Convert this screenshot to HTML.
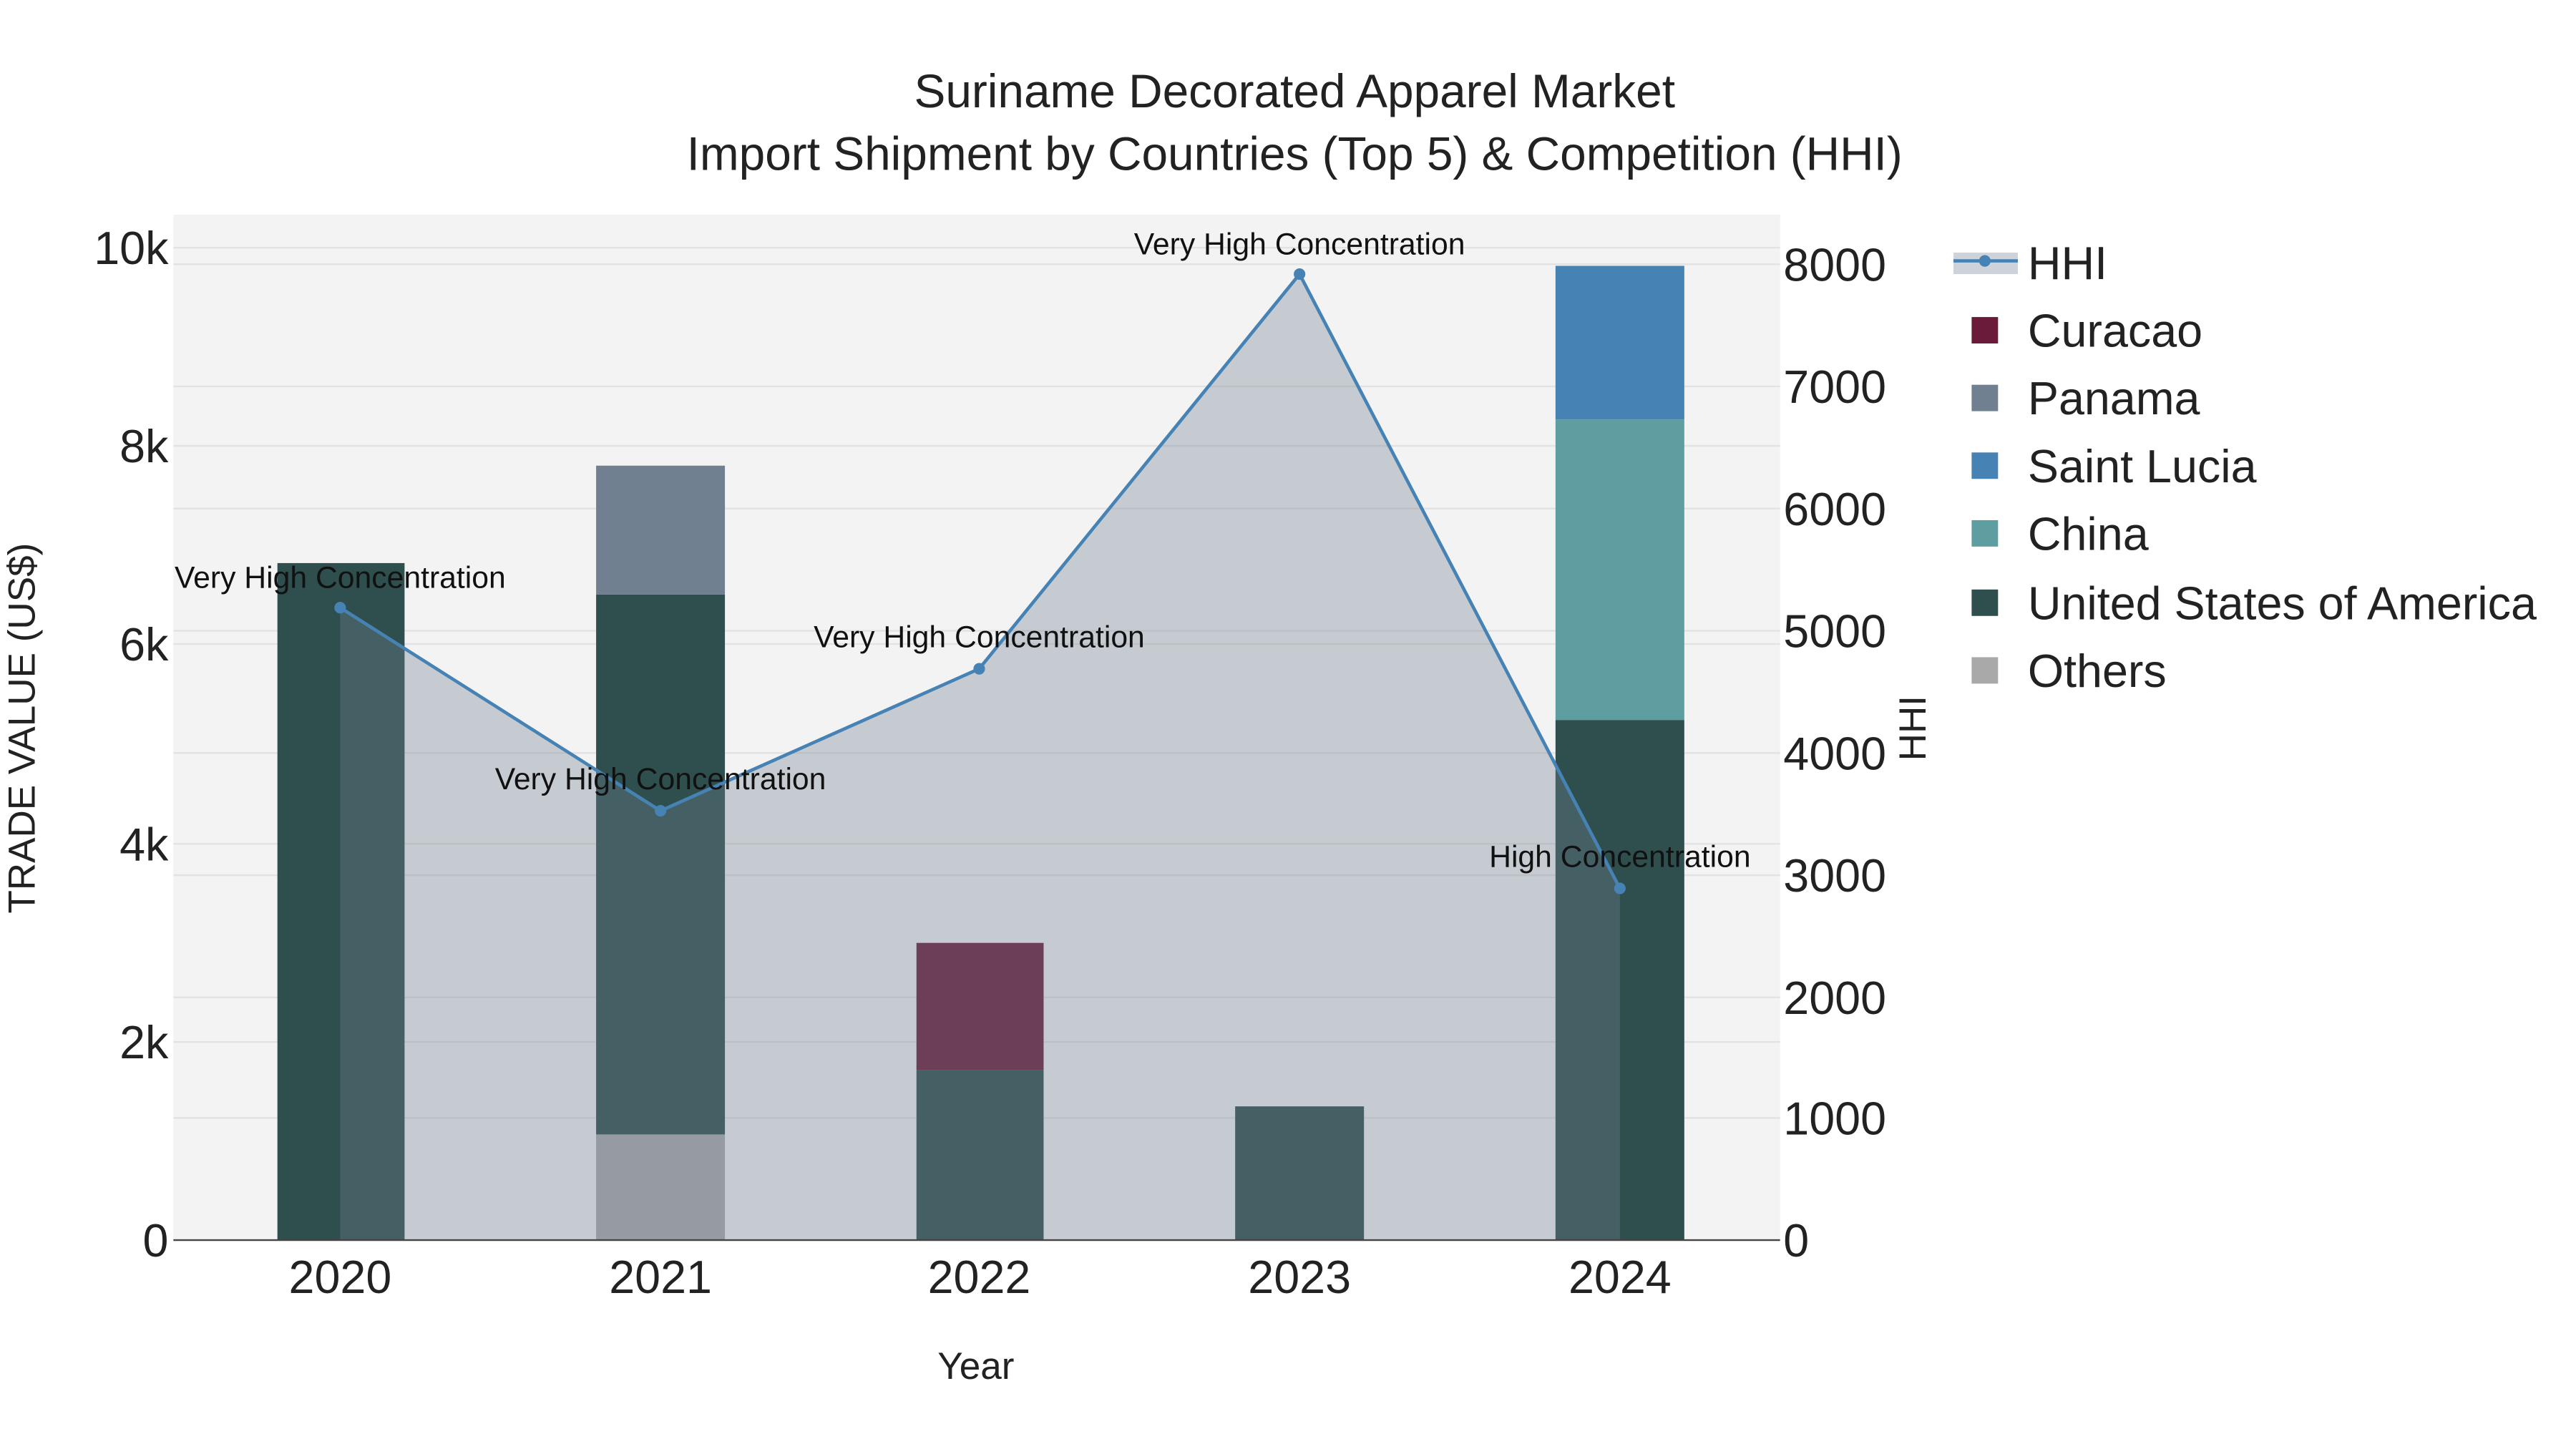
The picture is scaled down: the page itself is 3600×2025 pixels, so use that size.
<!DOCTYPE html>
<html><head><meta charset="utf-8"><style>html,body{margin:0;padding:0;background:#fff}svg{display:block}</style></head>
<body>
<svg width="3600" height="2025" viewBox="0 0 1560 877.5" xmlns="http://www.w3.org/2000/svg" font-family="Liberation Sans, sans-serif">
<rect x="0" y="0" width="1560" height="877.5" fill="#fff"/>
<rect x="105" y="130" width="973" height="621" fill="#f3f3f3"/>
<g stroke="#e2e2e2" stroke-width="1">
<line x1="105" x2="1078" y1="150" y2="150"/><line x1="105" x2="1078" y1="270" y2="270"/><line x1="105" x2="1078" y1="390" y2="390"/><line x1="105" x2="1078" y1="511" y2="511"/><line x1="105" x2="1078" y1="631" y2="631"/>
<line x1="105" x2="1078" y1="160" y2="160"/><line x1="105" x2="1078" y1="234" y2="234"/><line x1="105" x2="1078" y1="308" y2="308"/><line x1="105" x2="1078" y1="382" y2="382"/><line x1="105" x2="1078" y1="456" y2="456"/><line x1="105" x2="1078" y1="530" y2="530"/><line x1="105" x2="1078" y1="604" y2="604"/><line x1="105" x2="1078" y1="677" y2="677"/>
</g>
<rect x="168" y="341" width="77" height="410" fill="#2f4f4f"/>
<rect x="361" y="687" width="78" height="64" fill="#a9a9a9"/>
<rect x="361" y="360" width="78" height="327" fill="#2f4f4f"/>
<rect x="361" y="282" width="78" height="78" fill="#708090"/>
<rect x="555" y="648" width="77" height="103" fill="#2f4f4f"/>
<rect x="555" y="571" width="77" height="77" fill="#6a1b3a"/>
<rect x="748" y="670" width="78" height="81" fill="#2f4f4f"/>
<rect x="942" y="436" width="78" height="315" fill="#2f4f4f"/>
<rect x="942" y="254" width="78" height="182" fill="#5f9ea0"/>
<rect x="942" y="161" width="78" height="93" fill="#4682b4"/>
<polygon points="206,751 206,368 400,491 593,405 787,166 981,538 981,751" fill="rgba(112,128,144,0.35)"/>
<polyline points="206,368 400,491 593,405 787,166 981,538" fill="none" stroke="#4682b4" stroke-width="2"/>
<g fill="#4682b4"><circle cx="206" cy="368" r="3.5"/><circle cx="400" cy="491" r="3.5"/><circle cx="593" cy="405" r="3.5"/><circle cx="787" cy="166" r="3.5"/><circle cx="981" cy="538" r="3.5"/></g>
<line x1="105" x2="1078" y1="751" y2="751" stroke="#444" stroke-width="1"/>
<g font-size="18.5" fill="#111" text-anchor="middle">
<text x="206" y="356">Very High Concentration</text>
<text x="400" y="478">Very High Concentration</text>
<text x="593" y="392">Very High Concentration</text>
<text x="787" y="154">Very High Concentration</text>
<text x="981" y="525">High Concentration</text>
</g>
<g font-size="28.5" fill="#222" text-anchor="middle">
<text x="784" y="65">Suriname Decorated Apparel Market</text>
<text x="784" y="103">Import Shipment by Countries (Top 5) &amp; Competition (HHI)</text>
</g>
<g font-size="28" fill="#222" text-anchor="end">
<text x="102" y="160">10k</text><text x="102" y="280">8k</text><text x="102" y="400">6k</text><text x="102" y="521">4k</text><text x="102" y="641">2k</text><text x="102" y="761">0</text>
</g>
<g font-size="28" fill="#222" text-anchor="start">
<text x="1080" y="170">8000</text><text x="1080" y="244">7000</text><text x="1080" y="318">6000</text><text x="1080" y="392">5000</text><text x="1080" y="466">4000</text><text x="1080" y="540">3000</text><text x="1080" y="614">2000</text><text x="1080" y="687">1000</text><text x="1080" y="761">0</text>
</g>
<g font-size="28" fill="#222" text-anchor="middle">
<text x="206" y="783">2020</text><text x="400" y="783">2021</text><text x="593" y="783">2022</text><text x="787" y="783">2023</text><text x="981" y="783">2024</text>
</g>
<text x="591" y="835" font-size="23" fill="#222" text-anchor="middle">Year</text>
<text transform="translate(21,441) rotate(-90)" font-size="23" fill="#222" text-anchor="middle">TRADE VALUE (US$)</text>
<text transform="translate(1166,441) rotate(-90)" font-size="23" fill="#222" text-anchor="middle">HHI</text>
<rect x="1183" y="153" width="39" height="13" fill="rgba(112,128,144,0.35)"/>
<line x1="1183" x2="1222" y1="158" y2="158" stroke="#4682b4" stroke-width="2"/>
<circle cx="1202" cy="158" r="3.5" fill="#4682b4"/>
<rect x="1194" y="192" width="16" height="16" fill="#6a1b3a"/>
<rect x="1194" y="233" width="16" height="16" fill="#708090"/>
<rect x="1194" y="274" width="16" height="16" fill="#4682b4"/>
<rect x="1194" y="315" width="16" height="16" fill="#5f9ea0"/>
<rect x="1194" y="357" width="16" height="16" fill="#2f4f4f"/>
<rect x="1194" y="398" width="16" height="16" fill="#a9a9a9"/>
<g font-size="28" fill="#222">
<text x="1228" y="169">HHI</text><text x="1228" y="210">Curacao</text><text x="1228" y="251">Panama</text><text x="1228" y="292">Saint Lucia</text><text x="1228" y="333">China</text><text x="1228" y="375">United States of America</text><text x="1228" y="416">Others</text>
</g>
</svg>
</body></html>
